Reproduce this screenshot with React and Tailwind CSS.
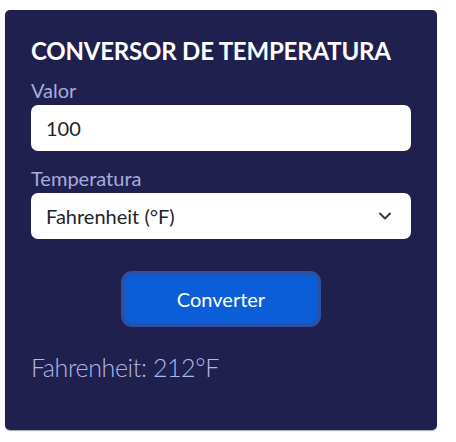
export default function App() {
  return (
    <div
      className="min-h-screen bg-white pl-[5px] pt-[10px]"
      style={{ fontFamily: 'Lato, "Noto Sans", sans-serif' }}
    >
      <div className="w-[432px] h-[420px] rounded-[5px] bg-[#20204f] px-[26px] pt-[26px] shadow-[0_1px_1px_rgba(0,0,0,0.35)]">
        <h3 className="text-[24px] leading-[29px] font-bold tracking-[-0.2px] text-white mb-[13px] whitespace-nowrap">
          CONVERSOR DE TEMPERATURA
        </h3>

        <label className="block text-[20px] leading-[24px] text-[#a7acdf] mb-[3px]">
          Valor
        </label>
        <input
          type="number"
          defaultValue="100"
          className="block w-full h-[46px] rounded-[7px] bg-white px-[15px] text-[20px] text-[#212529] outline-none"
        />

        <label className="block text-[20px] leading-[24px] text-[#a7acdf] mt-[15px] mb-[3px]">
          Temperatura
        </label>
        <div className="relative">
          <select
            defaultValue="F"
            className="block w-full h-[46px] appearance-none rounded-[7px] bg-white px-[15px] text-[20px] text-[#212529] outline-none"
          >
            <option value="C">Celsius (°C)</option>
            <option value="F">Fahrenheit (°F)</option>
            <option value="K">Kelvin (K)</option>
          </select>
          <svg
            className="absolute right-[19px] top-[18px] pointer-events-none"
            width="14"
            height="10"
            viewBox="0 0 14 10"
            fill="none"
          >
            <path
              d="M2 2.5l5 5 5-5"
              stroke="#343a40"
              strokeWidth="2"
              strokeLinecap="round"
              strokeLinejoin="round"
            />
          </svg>
        </div>

        <div className="flex justify-center mt-[36px]">
          <button className="w-[192px] h-[48px] rounded-[7px] bg-[#0b5ed7] text-white text-[20px] ring-4 ring-[#3184fd]/50">
            Converter
          </button>
        </div>

        <p className="mt-[29px] text-[25px] leading-[30px] font-light tracking-[-0.4px] text-[#b3b7ec]">
          Fahrenheit: 212°F
        </p>
      </div>
    </div>
  );
}
